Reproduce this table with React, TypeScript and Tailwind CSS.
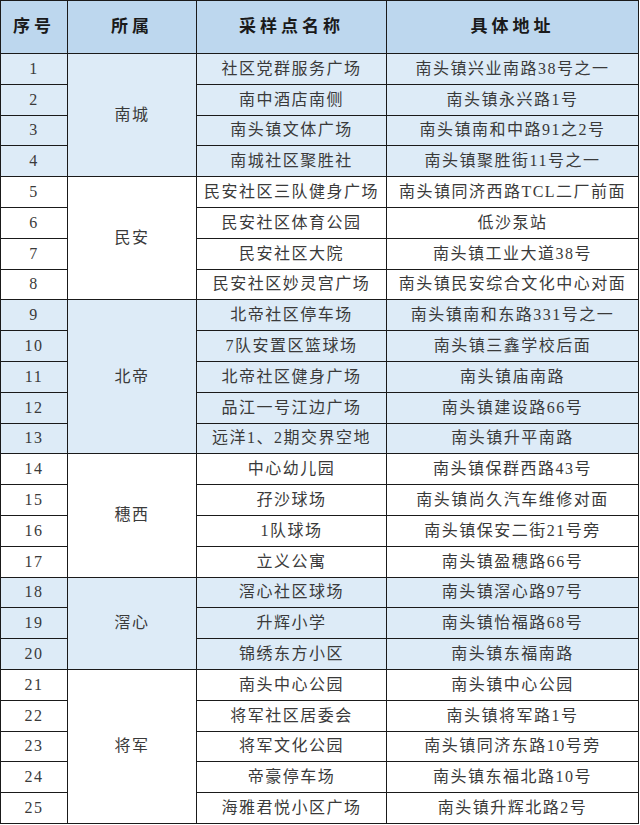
import React from "react";

type Row = { no: number; name: string; addr: string };
type Group = { area: string; blue: boolean; rows: Row[] };

const groups: Group[] = [
  {
    area: "南城",
    blue: true,
    rows: [
      { no: 1, name: "社区党群服务广场", addr: "南头镇兴业南路38号之一" },
      { no: 2, name: "南中酒店南侧", addr: "南头镇永兴路1号" },
      { no: 3, name: "南头镇文体广场", addr: "南头镇南和中路91之2号" },
      { no: 4, name: "南城社区聚胜社", addr: "南头镇聚胜街11号之一" },
    ],
  },
  {
    area: "民安",
    blue: false,
    rows: [
      { no: 5, name: "民安社区三队健身广场", addr: "南头镇同济西路TCL二厂前面" },
      { no: 6, name: "民安社区体育公园", addr: "低沙泵站" },
      { no: 7, name: "民安社区大院", addr: "南头镇工业大道38号" },
      { no: 8, name: "民安社区妙灵宫广场", addr: "南头镇民安综合文化中心对面" },
    ],
  },
  {
    area: "北帝",
    blue: true,
    rows: [
      { no: 9, name: "北帝社区停车场", addr: "南头镇南和东路331号之一" },
      { no: 10, name: "7队安置区篮球场", addr: "南头镇三鑫学校后面" },
      { no: 11, name: "北帝社区健身广场", addr: "南头镇庙南路" },
      { no: 12, name: "品江一号江边广场", addr: "南头镇建设路66号" },
      { no: 13, name: "远洋1、2期交界空地", addr: "南头镇升平南路" },
    ],
  },
  {
    area: "穗西",
    blue: false,
    rows: [
      { no: 14, name: "中心幼儿园", addr: "南头镇保群西路43号" },
      { no: 15, name: "孖沙球场", addr: "南头镇尚久汽车维修对面" },
      { no: 16, name: "1队球场", addr: "南头镇保安二街21号旁" },
      { no: 17, name: "立义公寓", addr: "南头镇盈穗路66号" },
    ],
  },
  {
    area: "滘心",
    blue: true,
    rows: [
      { no: 18, name: "滘心社区球场", addr: "南头镇滘心路97号" },
      { no: 19, name: "升辉小学", addr: "南头镇怡福路68号" },
      { no: 20, name: "锦绣东方小区", addr: "南头镇东福南路" },
    ],
  },
  {
    area: "将军",
    blue: false,
    rows: [
      { no: 21, name: "南头中心公园", addr: "南头镇中心公园" },
      { no: 22, name: "将军社区居委会", addr: "南头镇将军路1号" },
      { no: 23, name: "将军文化公园", addr: "南头镇同济东路10号旁" },
      { no: 24, name: "帝豪停车场", addr: "南头镇东福北路10号" },
      { no: 25, name: "海雅君悦小区广场", addr: "南头镇升辉北路2号" },
    ],
  },
];

const cell = "border border-[#1a1a1a] text-center align-middle p-0 whitespace-nowrap";

export default function App() {
  return (
    <div className="w-[640px] h-[825px] bg-white overflow-hidden">
      <table
        className="table-fixed border-collapse w-[638px] text-[16px] tracking-[1.5px] text-[#3a3a3a]"
        style={{ fontFamily: '"Liberation Serif", "Noto Sans CJK SC", serif' }}
      >
        <colgroup>
          <col className="w-[67px]" />
          <col className="w-[129px]" />
          <col className="w-[190px]" />
          <col className="w-[252px]" />
        </colgroup>
        <thead>
          <tr className="h-[53px] bg-[#bdd7ee] text-[17px] font-bold tracking-[4px] text-[#1a1a1a]">
            <th className={cell}>序号</th>
            <th className={cell}>所属</th>
            <th className={cell}>采样点名称</th>
            <th className={cell}>具体地址</th>
          </tr>
        </thead>
        <tbody>
          {groups.map((g) =>
            g.rows.map((r, i) => (
              <tr key={r.no} className={`h-[30.8px] ${g.blue ? "bg-[#ddebf7]" : "bg-white"}`}>
                <td className={cell}>{r.no}</td>
                {i === 0 && (
                  <td className={cell} rowSpan={g.rows.length}>
                    {g.area}
                  </td>
                )}
                <td className={cell}>{r.name}</td>
                <td className={cell}>{r.addr}</td>
              </tr>
            ))
          )}
        </tbody>
      </table>
    </div>
  );
}
